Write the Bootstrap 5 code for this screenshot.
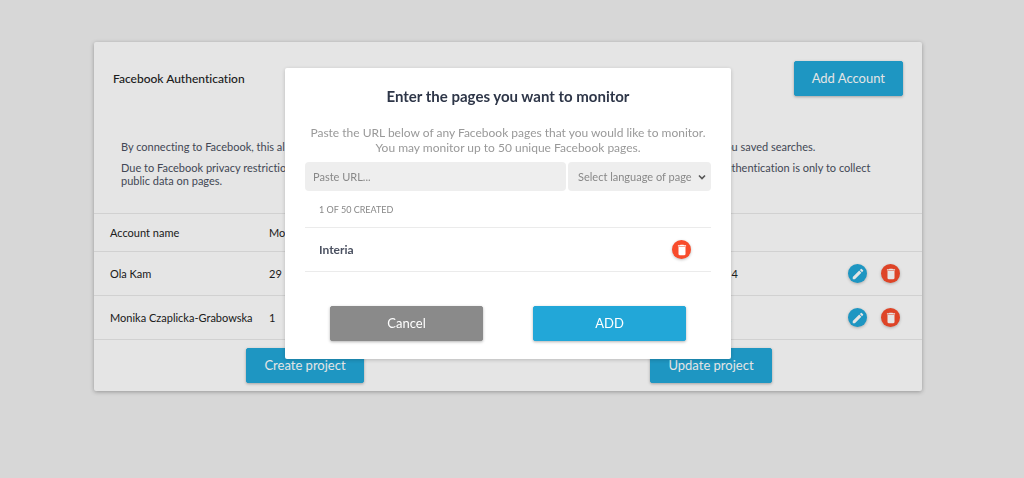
<!DOCTYPE html>
<html lang="en">
<head>
<meta charset="utf-8">
<meta name="viewport" content="width=device-width, initial-scale=1">
<title>Facebook Authentication</title>
<link href="https://cdn.jsdelivr.net/npm/bootstrap@5.3.0/dist/css/bootstrap.min.css" rel="stylesheet">
<style>
  body { font-family: Lato, sans-serif; font-size: 11px; line-height: 13px; background: #f0f0f0; color: #222; font-variant-ligatures: none; }
  .page-area { padding: 42px 102px 42px 94px; }
  .panel { background: #fff; border-radius: 2px; box-shadow: 0 1px 4px rgba(0,0,0,.3); }
  .panel-head { padding: 19px 19px 0; }
  .panel-title { font-size: 12px; line-height: 16px; font-weight: 500; }
  .btn-flat { --bs-btn-font-family: Lato; --bs-btn-color: #fff; --bs-btn-bg: #22a7d8; --bs-btn-border-color: #22a7d8;
    --bs-btn-hover-color: #fff; --bs-btn-hover-bg: #1c93bf; --bs-btn-font-size: 13px; --bs-btn-line-height: 15px;
    --bs-btn-padding-x: 17px; --bs-btn-padding-y: 9px; --bs-btn-border-radius: 2px;
    box-shadow: 0 1px 3px rgba(0,0,0,.3); }
  .btn-grey { --bs-btn-bg: #8a8a8a; --bs-btn-border-color: #8a8a8a; --bs-btn-hover-bg: #777; }
  .intro { color: #4a5060; padding: 44px 40px 26px 27px; }
  .accounts { --bs-table-bg: transparent; --bs-table-color: #222; border-color: #ededed; table-layout: fixed; }
  .accounts th, .accounts td { font-weight: 400; padding: 0 0 0 16px; vertical-align: middle; border-color: #e9e9e9; }
  .accounts thead tr { height: 38px; border-top: 1px solid #e9e9e9; }
  .accounts tbody tr { height: 44px; }
  .col-name { width: 159px; }
  .col-pages { width: 456px; }
  .col-tools { width: 140px; }
  .round-btn { width: 19px; height: 19px; border-radius: 50%; background: #22a7d8; color: #fff; box-shadow: 0 1px 3px rgba(0,0,0,.25); }
  .round-btn.remove { background: #f84c2c; }
  .round-btn svg { display: block; width: 14px; height: 14px; fill: currentColor; }
  .tools { gap: 14px; padding-right: 22px; }
  .modal-backdrop { --bs-backdrop-opacity: .1; }
  .modal { --bs-modal-width: 446px; padding-right: 8px; }
  .modal-dialog { margin-top: 68px; }
  .modal-content { border: 0; border-radius: 2px; box-shadow: 0 1px 4px rgba(0,0,0,.2); padding: 18px 20px; }
  .dialog-title { font-size: 15px; line-height: 20px; font-weight: 700; color: #2e3648; margin-bottom: 19px; }
  .dialog-text { font-size: 12px; line-height: 15px; color: #999; margin-bottom: 7px; }
  .url-row { gap: 2px; }
  .field { background-color: #eee; border: 0; border-radius: 4px; color: #888; font-size: 11px; line-height: 13px; padding: 8px; }
  .field::placeholder { color: #888; }
  select.field { width: 143px; padding: 8px 10px; background-position: right 5px center; background-size: 8px;
    background-image: url("data:image/svg+xml,%3Csvg xmlns='http://www.w3.org/2000/svg' viewBox='0 0 8 8'%3E%3Cpath d='M1 2.5 4 5.5 7 2.5' fill='none' stroke='%23555' stroke-width='1.6'/%3E%3C/svg%3E"); }
  .count { color: #888; font-size: 9px; padding: 12px 14px 11px; }
  .page-row { border: solid #ebebeb; border-width: 1px 0; height: 45px; padding: 0 20px 0 14px; }
  .page-name { font-size: 12px; line-height: 15px; font-weight: 700; color: #4a5060; }
  .dialog-actions { padding-top: 34px; }
  .panel-actions { padding: 8px; }
</style>
</head>
<body>
<svg class="d-none" aria-hidden="true">
  <symbol id="pencil" viewBox="0 0 24 24"><path d="M3 17.3V21h3.7L17.8 9.9l-3.7-3.7L3 17.3zM20.7 7a1 1 0 0 0 0-1.4l-2.3-2.3a1 1 0 0 0-1.4 0l-1.8 1.8 3.7 3.7L20.7 7z"/></symbol>
  <symbol id="trash" viewBox="0 0 24 24"><path d="M6 19c0 1.100.9 2 2 2h8c1.100 0 2-.9 2-2V7H6v12zM19 4h-3.500l-1-1h-5l-1 1H5v2h14V4z"/></symbol>
</svg>

<main class="page-area">
  <section class="panel">
    <header class="panel-head d-flex justify-content-between align-items-center">
      <h1 class="panel-title mb-0">Facebook Authentication</h1>
      <button type="button" class="btn btn-flat">Add Account</button>
    </header>
    <div class="intro">
      <p class="mb-2">By connecting to Facebook, this allows our platform to collect all public data from the Facebook pages which were added for you saved searches.</p>
      <p class="mb-0">Due to Facebook privacy restrictions, we are not able to collect any raw data from private user profiles or closed groups. The authentication is only to collect public data on pages.</p>
    </div>
    <table class="table accounts mb-0">
      <thead>
        <tr><th class="col-name" scope="col">Account name</th><th class="col-pages" scope="col">Monitored pages</th><td></td><td class="col-tools"></td></tr>
      </thead>
      <tbody>
        <tr><td class="text-nowrap">Ola Kam</td><td>29</td><td>24</td>
          <td><div class="tools d-flex justify-content-end">
            <button type="button" class="round-btn btn p-0 border-0 d-flex align-items-center justify-content-center" aria-label="Edit Ola Kam"><svg><use href="#pencil"/></svg></button>
            <button type="button" class="round-btn remove btn p-0 border-0 d-flex align-items-center justify-content-center" aria-label="Delete Ola Kam"><svg><use href="#trash"/></svg></button>
          </div></td></tr>
        <tr><td class="text-nowrap">Monika Czaplicka-Grabowska</td><td>1</td><td>1</td>
          <td><div class="tools d-flex justify-content-end">
            <button type="button" class="round-btn btn p-0 border-0 d-flex align-items-center justify-content-center" aria-label="Edit Monika Czaplicka-Grabowska"><svg><use href="#pencil"/></svg></button>
            <button type="button" class="round-btn remove btn p-0 border-0 d-flex align-items-center justify-content-center" aria-label="Delete Monika Czaplicka-Grabowska"><svg><use href="#trash"/></svg></button>
          </div></td></tr>
      </tbody>
    </table>
    <footer class="panel-actions">
      <div class="row g-0 text-center">
        <div class="col"><button type="button" class="btn btn-flat">Create project</button></div>
        <div class="col"><button type="button" class="btn btn-flat">Update project</button></div>
      </div>
    </footer>
  </section>
</main>

<div class="modal-backdrop show"></div>
<div class="modal d-block" role="dialog" aria-modal="true" aria-labelledby="dialogTitle">
  <div class="modal-dialog">
    <form class="modal-content">
      <h2 class="dialog-title text-center" id="dialogTitle">Enter the pages you want to monitor</h2>
      <p class="dialog-text text-center">Paste the URL below of any Facebook pages that you would like to monitor.<br>You may monitor up to 50 unique Facebook pages.</p>
      <div class="url-row d-flex">
        <input type="url" class="field form-control flex-fill" placeholder="Paste URL..." aria-label="Page URL">
        <select class="field form-select flex-shrink-0" aria-label="Language of page"><option>Select language of page</option></select>
      </div>
      <div class="count">1 OF 50 CREATED</div>
      <div class="page-row d-flex align-items-center justify-content-between">
        <span class="page-name">Interia</span>
        <button type="button" class="round-btn remove btn p-0 border-0 d-flex align-items-center justify-content-center" aria-label="Delete Interia"><svg><use href="#trash"/></svg></button>
      </div>
      <div class="dialog-actions row g-0 text-center">
        <div class="col"><button type="button" class="btn btn-flat btn-grey w-75">Cancel</button></div>
        <div class="col"><button type="submit" class="btn btn-flat w-75">ADD</button></div>
      </div>
    </form>
  </div>
</div>
<script src="https://cdn.jsdelivr.net/npm/bootstrap@5.3.0/dist/js/bootstrap.bundle.min.js"></script>
</body>
</html>
